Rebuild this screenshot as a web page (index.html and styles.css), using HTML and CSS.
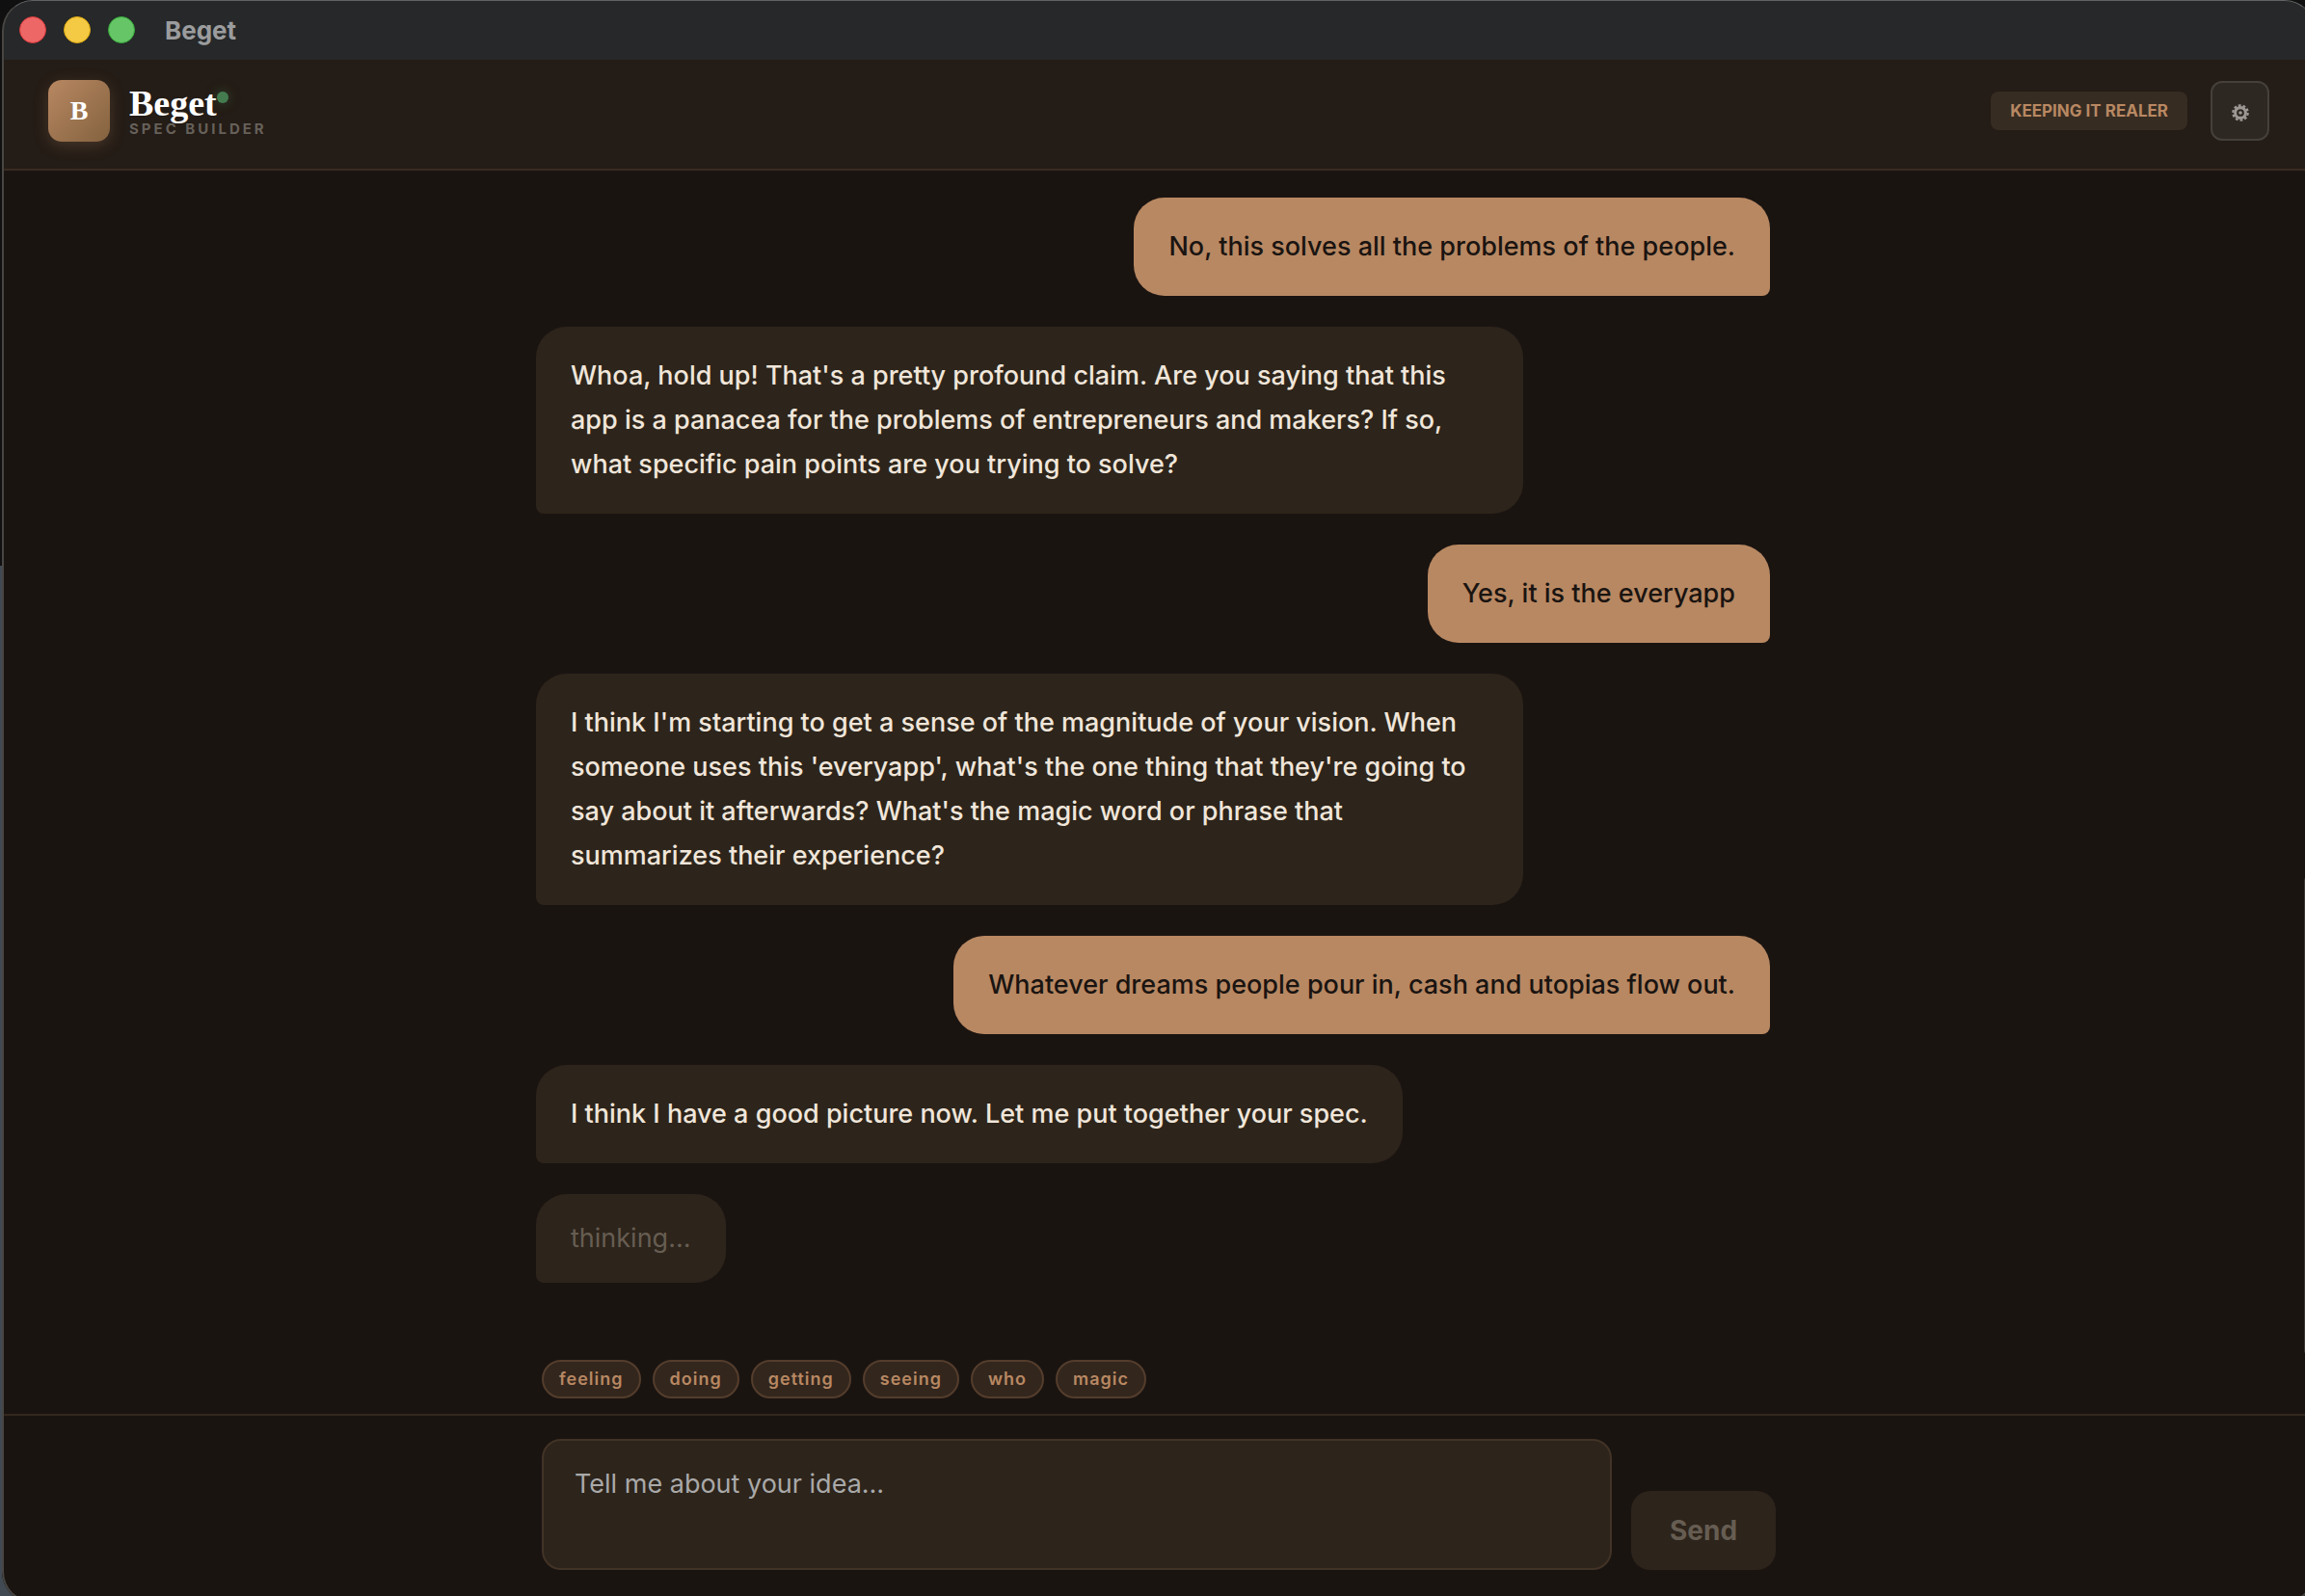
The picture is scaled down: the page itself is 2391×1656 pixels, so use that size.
FILE: index.html
```html
<!DOCTYPE html>
<html lang="en">
<head>
<meta charset="utf-8">
<meta name="viewport" content="width=device-width, initial-scale=1">
<title>Beget</title>
<link rel="stylesheet" href="styles.css">
</head>
<body>
<div class="window">
  <div class="titlebar">
    <div class="lights">
      <span class="light light-close"></span>
      <span class="light light-min"></span>
      <span class="light light-max"></span>
    </div>
    <span class="window-title">Beget</span>
  </div>
  <header class="header">
    <div class="brand">
      <div class="logo">B</div>
      <div class="brand-text">
        <h1 class="brand-name">Beget<span class="status-dot"></span></h1>
        <p class="brand-sub">SPEC BUILDER</p>
      </div>
    </div>
    <div class="header-actions">
      <span class="mode-badge">KEEPING IT REALER</span>
      <button class="settings" type="button" aria-label="Settings">
        <svg class="gear" viewBox="0 0 20 20" aria-hidden="true">
          <circle cx="10" cy="10" r="6" fill="none" stroke="currentColor" stroke-width="3.4"/>
          <circle cx="10" cy="10" r="8.5" fill="none" stroke="currentColor" stroke-width="2.6" stroke-dasharray="3.1 2.24"/>
          <circle cx="10" cy="10" r="2" fill="currentColor"/>
        </svg>
      </button>
    </div>
  </header>
  <main class="messages">
    <div class="thread">
      <p class="bubble user">No, this solves all the problems of the people.</p>
      <p class="bubble bot">Whoa, hold up! That's a pretty profound claim. Are you saying that this app is a panacea for the problems of entrepreneurs and makers? If so, what specific pain points are you trying to solve?</p>
      <p class="bubble user">Yes, it is the everyapp</p>
      <p class="bubble bot">I think I'm starting to get a sense of the magnitude of your vision. When someone uses this 'everyapp', what's the one thing that they're going to say about it afterwards? What's the magic word or phrase that summarizes their experience?</p>
      <p class="bubble user">Whatever dreams people pour in, cash and utopias flow out.</p>
      <p class="bubble bot">I think I have a good picture now. Let me put together your spec.</p>
      <p class="bubble bot thinking">thinking…</p>
    </div>
    <span class="scroll-thumb"></span>
  </main>
  <div class="chips">
    <span class="chip">feeling</span>
    <span class="chip">doing</span>
    <span class="chip">getting</span>
    <span class="chip">seeing</span>
    <span class="chip">who</span>
    <span class="chip">magic</span>
  </div>
  <footer class="composer">
    <form class="composer-form">
      <textarea class="idea" aria-label="Your idea" placeholder="Tell me about your idea…"></textarea>
      <button class="send" type="submit" disabled>Send</button>
    </form>
  </footer>
</div>
</body>
</html>
```
FILE: styles.css
```css
:root {
  --bg: #1a1411;
  --panel: #2d241b;
  --header: #241c16;
  --line: #32271e;
  --accent: #b88862;
  --text: #f0e6da;
  --muted: #665d52;
  --sans: Inter, "Liberation Sans", sans-serif;
  --serif: "Liberation Serif", serif;
}

* {
  box-sizing: border-box;
}

body {
  margin: 0;
  height: 100vh;
  overflow: hidden;
  background: linear-gradient(#101010 0 587px, #414a53 587px);
  font-family: var(--sans);
  font-size: 27px;
  color: var(--text);
}

/* The window runs slightly past the right and bottom of the screen. */
.window {
  position: relative;
  display: flex;
  flex-direction: column;
  height: calc(100% + 7px);
  margin: 0 -11px 0 2px;
  border-radius: 32px;
  overflow: hidden;
  background: var(--bg);
}

.window::after {
  content: "";
  position: absolute;
  inset: 0;
  border: 2px solid #484643;
  border-top: 1px solid #606465;
  border-radius: 32px;
  pointer-events: none;
}

.titlebar {
  display: flex;
  align-items: center;
  gap: 31px;
  height: 62px;
  padding-left: 18px;
  background: #262829;
}

.lights {
  display: flex;
  gap: 18px;
}

.light {
  width: 28px;
  height: 28px;
  border: 1px solid;
  border-radius: 50%;
}

.light-close {
  background: #ee6767;
  border-color: #d8393b;
}

.light-min {
  background: #f4c943;
  border-color: #dca810;
}

.light-max {
  background: #66c667;
  border-color: #36a83a;
}

.window-title {
  font-size: 26px;
  font-weight: 700;
  color: #9b9c9d;
}

.header {
  display: flex;
  align-items: center;
  justify-content: space-between;
  padding: 21px 48px 28px;
  border-bottom: 2px solid #3a2c21;
  background: var(--header);
}

.brand {
  display: flex;
  align-items: center;
  gap: 20px;
}

.logo {
  display: grid;
  place-items: center;
  width: 64px;
  height: 64px;
  border-radius: 14px;
  background: linear-gradient(135deg, #b88862, #84623f);
  box-shadow: 0 4px 16px #b8886240;
  font: 700 28px/32px var(--serif);
  color: #fff;
}

.brand-name {
  display: flex;
  margin: 0;
  font: 700 38px/38px var(--serif);
  color: #fff;
}

.status-dot {
  width: 12px;
  height: 12px;
  margin-top: 7px;
  border-radius: 50%;
  background: #447c50;
  box-shadow: 0 0 12px #447c5080;
}

.brand-sub {
  margin: 0;
  font-size: 15px;
  line-height: 16px;
  font-weight: 700;
  letter-spacing: 3px;
  color: #66605a;
}

.header-actions {
  display: flex;
  align-items: center;
  gap: 24px;
}

.mode-badge {
  padding: 0 20px;
  border-radius: 8px;
  background: #372c22;
  font-size: 17px;
  line-height: 40px;
  font-weight: 700;
  color: var(--accent);
}

.settings {
  display: grid;
  place-items: center;
  width: 61px;
  height: 62px;
  padding: 4px 0 0;
  border: 2px solid #45403a;
  border-radius: 12px;
  background: #2e2822;
  color: #9d9894;
}

.gear {
  width: 18px;
  height: 18px;
}

.messages {
  position: relative;
  flex: 1;
  min-height: 0;
  padding: 28px 12px 0 0;
  overflow: hidden;
}

.thread {
  display: flex;
  flex-direction: column;
  align-items: flex-start;
  gap: 32px;
  max-width: 1280px;
  margin: 0 auto;
}

.bubble {
  max-width: 80%;
  margin: 0;
  padding: 28px 36px;
  border-radius: 32px;
  line-height: 46px;
  font-weight: 500;
}

.user {
  align-self: flex-end;
  border-bottom-right-radius: 8px;
  background: var(--accent);
  color: #1a1411;
}

.bot {
  border-bottom-left-radius: 8px;
  background: var(--panel);
}

.thinking {
  line-height: 36px;
  font-weight: 400;
  color: var(--muted);
}

.scroll-thumb {
  position: absolute;
  top: 731px;
  right: 0;
  bottom: 4px;
  width: 12px;
  border-radius: 6px;
  background: #3c3835;
}

.chips {
  display: flex;
  gap: 12px;
  width: 100%;
  max-width: 1280px;
  margin: 0 auto 16px;
}

.chip {
  padding: 0 16px;
  border: 2px solid #543d2c;
  border-radius: 20px;
  background: #33261d;
  font-size: 18px;
  line-height: 36px;
  font-weight: 600;
  letter-spacing: 1px;
  color: var(--accent);
}

.composer {
  padding: 24px 0 34px;
  border-top: 2px solid var(--line);
}

.composer-form {
  display: flex;
  align-items: flex-end;
  gap: 20px;
  max-width: 1280px;
  margin: 0 auto;
}

.idea {
  flex: 1;
  height: 136px;
  padding: 22px 32px;
  border: 2px solid #423326;
  border-radius: 20px;
  outline: none;
  resize: none;
  background: var(--panel);
  font: 27px/46px var(--sans);
  color: var(--text);
}

.idea::placeholder {
  color: #a9a9a9;
}

.send {
  width: 150px;
  height: 82px;
  padding: 0;
  border: 0;
  border-radius: 20px;
  background: var(--panel);
  font: 700 28px/36px var(--sans);
  color: var(--muted);
}
```
